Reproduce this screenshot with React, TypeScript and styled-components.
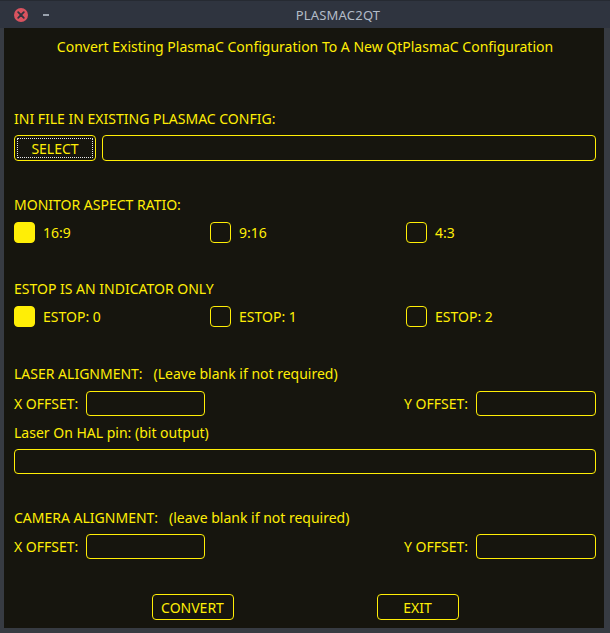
import React from "react";
import styled, { createGlobalStyle } from "styled-components";

const FG = "#ffee06";
const BG = "#16150e";

const Global = createGlobalStyle`
  html, body { margin: 0; padding: 0; background: #2f343f; }
  body { font-family: "Noto Sans", "Open Sans", sans-serif; }
  * { box-sizing: border-box; }
`;

const Window = styled.div`
  width: 610px;
  height: 633px;
  display: flex;
  flex-direction: column;
  background: #373b42;
`;

const TitleBar = styled.div`
  height: 28px;
  flex: none;
  display: grid;
  grid-template-columns: 66px 1fr;
  align-items: center;
  background: #2f343f;
  border-top: 1px solid #262a32;
`;

const TitleButtons = styled.div`
  display: flex;
  align-items: center;
  padding-left: 14px;
  gap: 15px;
`;

const CloseBtn = styled.div`
  width: 14px;
  height: 14px;
  border-radius: 50%;
  background: #d9535f;
  display: flex;
  align-items: center;
  justify-content: center;
`;

const MinBtn = styled.div`
  width: 6px;
  height: 2px;
  background: #9aa2ad;
`;

const Title = styled.div`
  text-align: center;
  color: #b3bcc8;
  font-size: 13px;
  letter-spacing: 0.2px;
`;

const Body = styled.div`
  flex: 1;
  margin: 0 6px 5px 4px;
  background: ${BG};
  color: ${FG};
  font-size: 14px;
  padding: 9px 8px 0 10px;
  display: flex;
  flex-direction: column;
`;

const Label = styled.div<{ $mt?: number; $center?: boolean }>`
  height: 20px;
  line-height: 20px;
  margin-top: ${(p) => p.$mt ?? 0}px;
  text-align: ${(p) => (p.$center ? "center" : "left")};
  white-space: pre;
`;

const Row = styled.div<{ $mt?: number; $h?: number }>`
  display: flex;
  align-items: center;
  height: ${(p) => p.$h ?? 25}px;
  margin-top: ${(p) => p.$mt ?? 0}px;
  gap: 6px;
`;

const SpreadRow = styled(Row)`
  justify-content: space-between;
`;

const Group = styled.div`
  display: flex;
  align-items: center;
  gap: 8px;
  height: 100%;
`;

const Button = styled.button<{ $focus?: boolean }>`
  width: 82px;
  height: 100%;
  background: transparent;
  color: ${FG};
  border: 1px solid ${FG};
  border-radius: 4px;
  font-family: inherit;
  font-size: 14px;
  padding: 0;
  outline: ${(p) => (p.$focus ? "1px dotted #e8e8e8" : "none")};
  outline-offset: -4px;
`;

const Field = styled.div<{ $w?: number }>`
  ${(p) => (p.$w ? `width: ${p.$w}px;` : "flex: 1;")}
  height: 100%;
  border: 1px solid ${FG};
  border-radius: 4px;
`;

const CheckGrid = styled.div<{ $mt?: number }>`
  display: grid;
  grid-template-columns: repeat(3, 190px);
  column-gap: 6px;
  height: 21px;
  margin-top: ${(p) => p.$mt ?? 0}px;
`;

const CheckItem = styled.div`
  display: flex;
  align-items: center;
  gap: 8px;
`;

const Box = styled.div<{ $on?: boolean }>`
  width: 21px;
  height: 21px;
  border-radius: 4px;
  border: 1px solid ${FG};
  background: ${(p) => (p.$on ? FG : "transparent")};
`;

const Footer = styled.div`
  display: flex;
  justify-content: center;
  gap: 143px;
  height: 26px;
  margin-top: 35px;
`;

const Checks = ({ items, mt }: { items: string[]; mt: number }) => (
  <CheckGrid $mt={mt}>
    {items.map((t, i) => (
      <CheckItem key={t}>
        <Box $on={i === 0} />
        <span>{t}</span>
      </CheckItem>
    ))}
  </CheckGrid>
);

const OffsetRow = ({ mt }: { mt: number }) => (
  <SpreadRow $mt={mt} $h={25}>
    <Group>
      <span>X OFFSET:</span>
      <Field $w={119} />
    </Group>
    <Group>
      <span>Y OFFSET:</span>
      <Field $w={120} />
    </Group>
  </SpreadRow>
);

export default function App() {
  return (
    <>
      <Global />
      <Window>
        <TitleBar>
          <TitleButtons>
            <CloseBtn>
              <svg width="8" height="8" viewBox="0 0 8 8">
                <path d="M1.2 1.2 L6.8 6.8 M6.8 1.2 L1.2 6.8" stroke="#2f343f" strokeWidth="1.8" strokeLinecap="round" />
              </svg>
            </CloseBtn>
            <MinBtn />
          </TitleButtons>
          <Title>PLASMAC2QT</Title>
        </TitleBar>
        <Body>
          <Label $center>Convert Existing PlasmaC Configuration To A New QtPlasmaC Configuration</Label>
          <Label $mt={52}>INI FILE IN EXISTING PLASMAC CONFIG:</Label>
          <Row $mt={6} $h={26}>
            <Button $focus>SELECT</Button>
            <Field />
          </Row>
          <Label $mt={34}>MONITOR ASPECT RATIO:</Label>
          <Checks mt={7} items={["16:9", "9:16", "4:3"]} />
          <Label $mt={36}>ESTOP IS AN INDICATOR ONLY</Label>
          <Checks mt={7} items={["ESTOP: 0", "ESTOP: 1", "ESTOP: 2"]} />
          <Label $mt={37}>{"LASER ALIGNMENT:   (Leave blank if not required)"}</Label>
          <OffsetRow mt={7} />
          <Label $mt={7}>Laser On HAL pin: (bit output)</Label>
          <Row $mt={6} $h={25}>
            <Field />
          </Row>
          <Label $mt={34}>{"CAMERA ALIGNMENT:   (leave blank if not required)"}</Label>
          <OffsetRow mt={6} />
          <Footer>
            <Button>CONVERT</Button>
            <Button>EXIT</Button>
          </Footer>
        </Body>
      </Window>
    </>
  );
}
